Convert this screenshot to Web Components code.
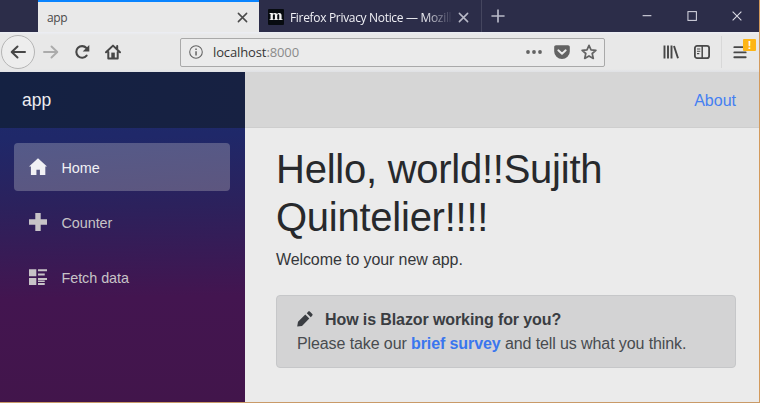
<!DOCTYPE html>
<html lang="en">
<head>
<meta charset="utf-8">
<title>app</title>
<style>
html,body{margin:0;width:760px;height:403px;overflow:hidden;font-family:"Liberation Sans",Arial,sans-serif;background:#ebebeb}
</style>
</head>
<body>
<browser-window>
  <tab-strip slot="tabs">
    <browser-tab active>app</browser-tab>
    <browser-tab favicon="m">Firefox Privacy Notice — Mozilla</browser-tab>
  </tab-strip>
  <nav-toolbar slot="toolbar" host="localhost" port=":8000"></nav-toolbar>
  <side-bar slot="page" brand="app">
    <nav-entry icon="home" active>Home</nav-entry>
    <nav-entry icon="plus">Counter</nav-entry>
    <nav-entry icon="list">Fetch data</nav-entry>
  </side-bar>
  <page-main slot="page">
    <span slot="top">About</span>
    <page-title>Hello, world!!Sujith Quintelier!!!!</page-title>
    <page-text>Welcome to your new app.</page-text>
    <survey-prompt heading="How is Blazor working for you?"></survey-prompt>
  </page-main>
</browser-window>
<script>
const ICONS = {
  back:'<path d="M15 8H2M7.5 2.500 1.700 8l5.800 5.500" fill="none" stroke="currentColor" stroke-width="2" stroke-linecap="round" stroke-linejoin="round"/>',
  forward:'<path d="M1 8h13M8.500 2.500l5.800 5.500-5.800 5.500" fill="none" stroke="currentColor" stroke-width="1.900" stroke-linecap="round" stroke-linejoin="round"/>',
  reload:'<path d="M12.600 11.600A5.800 5.800 0 1 1 12.400 4" fill="none" stroke="currentColor" stroke-width="2.100" stroke-linecap="round"/><path d="M15.300 1v6.600H8.700z" fill="currentColor"/>',
  house:'<path d="M1 8.300 8 1.600l7 6.700M3.300 8v6.600h9.400V8M12.200 2v3" fill="none" stroke="currentColor" stroke-width="2" stroke-linecap="round" stroke-linejoin="round"/><path d="M6.300 8.600h3.500v6H6.300z" fill="currentColor"/>',
  info:'<circle cx="8" cy="8" r="7.200" fill="none" stroke="currentColor" stroke-width="1.200"/><path d="M7.200 4h1.700v1.700H7.200zM7.200 7h1.700v5H7.200z" fill="currentColor"/>',
  dots:'<g fill="currentColor"><circle cx="2" cy="8" r="1.900"/><circle cx="8" cy="8" r="1.900"/><circle cx="14" cy="8" r="1.900"/></g>',
  pocket:'<path d="M2 1.300h12c1 0 1.800.8 1.800 1.800v4.400a7.800 7.600 0 0 1-15.600 0V3.100c0-1 .8-1.800 1.800-1.800z" fill="currentColor"/><path d="M4.300 6.300 8 9.800l3.700-3.500" fill="none" stroke="#ebebeb" stroke-width="1.900" stroke-linecap="round" stroke-linejoin="round"/>',
  star:'<path d="m8 1.300 2 4.500 4.900.5-3.700 3.200 1.100 4.900L8 11.900l-4.300 2.500 1.100-4.900L1.100 6.300 6 5.800z" fill="none" stroke="currentColor" stroke-width="1.700" stroke-linejoin="round"/>',
  library:'<path d="M1.500 1.500v13M5 1.500v13M8.500 1.500v13M11 2l4 12.300" fill="none" stroke="currentColor" stroke-width="1.900"/>',
  sidebar:'<rect x=".9" y="1.900" width="14.200" height="12.200" rx="2.200" fill="none" stroke="currentColor" stroke-width="1.800"/><path d="M8.200 2v12" stroke="currentColor" stroke-width="1.500"/><path d="M3 5h3.300M3 7.300h3.300M3 9.600h2.300" stroke="currentColor" stroke-width="1.100"/>',
  menu:'<path d="M1.500 2.500h13M1.500 8.500h13M1.500 14h13" stroke="currentColor" stroke-width="2.100" stroke-linecap="round"/>',
  close:'<path d="m2 2 12 12M14 2 2 14" stroke="currentColor" stroke-width="2.200" stroke-linecap="round"/>',
  add:'<path d="M8 .5v15M.5 8h15" stroke="currentColor" stroke-width="1.900"/>',
  min:'<path d="M1 7.500h14" stroke="currentColor" stroke-width="1.700"/>',
  max:'<rect x="1.500" y="1" width="13.500" height="14" fill="none" stroke="currentColor" stroke-width="1.600"/>',
  exit:'<path d="m1 1 14 14M15 1 1 15" stroke="currentColor" stroke-width="1.700"/>',
  home:'<path d="M8 .3 16 7.500h-1.500V15H9.700v-4.500H6.600V15H1.700V7.500H0z" fill="currentColor"/>',
  plus:'<path d="M5.600 0h4.800v5.600H16v4.800h-5.600V16H5.600v-5.600H0V5.600h5.600z" fill="currentColor"/>',
  list:'<path d="M0 1h6.500v6.300H0zM0 8.800h6.500v6.300H0zM8 1h8v1.900H8zM8 4.800h6v1.900H8zM8 8.800h8v1.900H8zM8 11.100h6v1.300H8zM8 13.400h6v1.700H8z" fill="currentColor"/>',
  pencil:'<path d="M.2 15.500 1 10.800 8.300 3.600l4 4-7.300 7.300zM9.800 2.200 11.300.6c.5-.5 1-.5 1.500 0l2.500 2.500c.5.500.5 1 0 1.500l-1.500 1.600z" fill="currentColor"/>'
};

function define(name, css, markup) {
  customElements.define(name, class extends HTMLElement {
    connectedCallback() {
      if (this.shadowRoot) return;
      const root = this.attachShadow({ mode: 'open' });
      root.innerHTML = `<style>*{box-sizing:border-box}${css}</style>${markup(this)}`;
    }
  });
}
const a = (el, n) => el.getAttribute(n) || '';

define('ui-icon',
  ':host{display:block;flex:none;width:var(--s,16px);height:var(--s,16px)}svg{display:block;width:100%;height:100%;overflow:visible}',
  el => `<svg viewBox="0 0 16 16">${ICONS[a(el, 'name')]}</svg>`);

define('browser-window',
  `:host{display:grid;grid-template-rows:32px 40px 1fr;width:760px;height:403px;box-sizing:border-box;border-right:1px solid #d39a5c;border-bottom:1px solid #c99a68;background:#ebebeb}
   .page{display:grid;grid-template-columns:245px 1fr;min-height:0}`,
  () => '<slot name="tabs"></slot><slot name="toolbar"></slot><div class="page"><slot name="page"></slot></div>');

define('tab-strip',
  `:host{display:flex;background:#2c2d49;padding-left:38px;color:#d5d6e2;min-width:0}
   .add{display:flex;align-items:center;padding-left:9px;--s:14px;color:#b9bac8}
   .win{margin-left:auto;display:flex;align-items:center;gap:35px;padding-right:17px;--s:10px;color:#dcdce6}`,
  () => `<slot></slot><div class="add"><ui-icon name="add"></ui-icon></div>
   <div class="win"><ui-icon name="min"></ui-icon><ui-icon name="max"></ui-icon><ui-icon name="exit"></ui-icon></div>`);

define('browser-tab',
  `:host{display:flex;align-items:center;box-sizing:border-box;width:223px;height:32px;padding:2px 12px 0 9px;font:12px "Open Sans","Noto Sans",sans-serif;letter-spacing:-.32px;border-right:1px solid #45465f;color:#b9bac8}
   :host([active]){width:221px;padding:1px 11px 0 9px;background:#e9e9e9;color:#4a4a4a;border-top:2px solid #0a84ff;border-right:0}
   .fav{display:flex;align-items:center;justify-content:center;flex:none;width:16px;height:16px;border-radius:1px;background:#070b10;color:#f3f3f3;font:bold 13px/16px "DejaVu Serif",serif;margin-right:6px;letter-spacing:0;padding-bottom:3px}
   .fav span{transform:scaleX(.98)}
   .label{flex:1;min-width:0;overflow:hidden;white-space:nowrap}
   .fade{flex:none;width:163px;color:#f0f0f5;-webkit-mask-image:linear-gradient(90deg,#000 134px,transparent 163px);mask-image:linear-gradient(90deg,#000 134px,transparent 163px)}
   ui-icon{--s:11px;margin-left:auto}`,
  el => `${el.hasAttribute('favicon') ? `<span class="fav"><span>${a(el, 'favicon')}</span></span>` : ''}
   <span class="label ${el.hasAttribute('favicon') ? 'fade' : ''}"><slot></slot></span><ui-icon name="close"></ui-icon>`);

define('nav-toolbar',
  `:host{display:flex;align-items:center;background:linear-gradient(#eceef4 0,#e8e8e8 3px,#e8e8e8 37px,#dfe1e5);color:#474747;padding:0 0 0 1px;min-width:0}
   .back{display:grid;place-items:center;width:34px;height:34px;border:1px solid #b5b5b5;border-radius:50%;background:#ededed}
   .fwd{color:#ababab;margin-left:8px}.rel{margin-left:15px}.hom{margin-left:15px}
   .url{display:flex;align-items:center;width:425px;height:29px;margin-left:59px;border:1px solid #a9a9a9;border-radius:2px;background:#ebebeb;padding:0 7px 0 8px;font:13px "Open Sans","Noto Sans",sans-serif;color:#363636;letter-spacing:-.12px}
   .url .txt{margin:0 auto 0 10px;white-space:pre}.port{color:#8a8a8a}
   .url ui-icon{color:#636363}.i{--s:14px}.pk{margin:0 11px 0 12px}
   .lib{margin-left:58px}.sb{margin-left:15px}
   .sep{width:1px;height:32px;background:#d8d8d8;margin-left:11px}
   .menu{position:relative;--s:14px;margin-left:11px}
   .badge{position:absolute;left:10px;top:-6px;width:13px;height:12px;background:#fdb515;border-radius:1px;color:#fff;font:bold 11px/12px "Liberation Sans",sans-serif;text-align:center}`,
  el => `<div class="back"><ui-icon name="back"></ui-icon></div>
   <ui-icon class="fwd" name="forward"></ui-icon><ui-icon class="rel" name="reload"></ui-icon><ui-icon class="hom" name="house"></ui-icon>
   <div class="url"><ui-icon class="i" name="info"></ui-icon><span class="txt">${a(el, 'host')}<span class="port">${a(el, 'port')}</span></span>
   <ui-icon name="dots"></ui-icon><ui-icon class="pk" name="pocket"></ui-icon><ui-icon name="star"></ui-icon></div>
   <ui-icon class="lib" name="library"></ui-icon><ui-icon class="sb" name="sidebar"></ui-icon><div class="sep"></div>
   <div class="menu"><ui-icon name="menu"></ui-icon><span class="badge">!</span></div>`);

define('side-bar',
  `:host{display:flex;flex-direction:column;background:linear-gradient(179deg,#1d2b6c 0%,#1f2869 20%,#2c215c 41%,#431550 68%,#42154b 100%);min-width:0}
   header{height:56px;padding-left:22px;background:linear-gradient(90deg,#142142,#172142);color:#ededf0;font-size:17.500px;line-height:57px}
   nav{display:flex;flex-direction:column;gap:7px;padding:15px 15px 0 14px}`,
  el => `<header>${a(el, 'brand')}</header><nav><slot></slot></nav>`);

define('nav-entry',
  `:host{display:flex;align-items:center;height:48px;border-radius:4px;padding:1px 15px 0;gap:14.500px;box-sizing:border-box;color:#c7c3c7;font-size:14.400px;letter-spacing:-.06px;--s:18px}
   :host([active]){background:linear-gradient(175deg,#545a89,#5d567f);color:#f1f1f4}
   ui-icon{transform:translateY(-1px)}`,
  el => `<ui-icon name="${a(el, 'icon')}"></ui-icon><span><slot></slot></span>`);

define('page-main',
  `:host{display:block;background:#ebebeb;color:#27292c;min-width:0}
   .top{height:56px;display:flex;align-items:center;justify-content:flex-end;padding:2px 23px 0 0;background:#d6d6d6;border-bottom:1px solid #cecece;color:#4580f2;font-size:16px}
   .body{padding:17px 23px 0 31px}`,
  () => '<div class="top"><slot name="top"></slot></div><div class="body"><slot></slot></div>');

define('page-title', ':host{display:block;font-size:40px;line-height:48px;letter-spacing:-.25px}', () => '<slot></slot>');
define('page-text', ':host{display:block;font-size:16px;line-height:24px;margin-top:7px;color:#35373a;letter-spacing:-.1px}', () => '<slot></slot>');

define('survey-prompt',
  `:host{display:block;box-sizing:border-box;height:73px;margin-top:23px;padding:12px 20px;border:1px solid #c6c7c9;border-radius:4px;background:#d3d3d4;color:#484b4f;font-size:16px;line-height:24px;letter-spacing:-.1px}
   .h{display:flex;align-items:center;gap:12px;--s:16px;color:#3a3d42}
   .h ui-icon{transform:translateY(-1px)}
   a{color:#3a76ee;font-weight:bold}`,
  el => `<div class="h"><ui-icon name="pencil"></ui-icon><strong>${a(el, 'heading')}</strong></div><div class="p">Please take our <a>brief survey</a> and tell us what you think.</div>`);
</script>
</body>
</html>
